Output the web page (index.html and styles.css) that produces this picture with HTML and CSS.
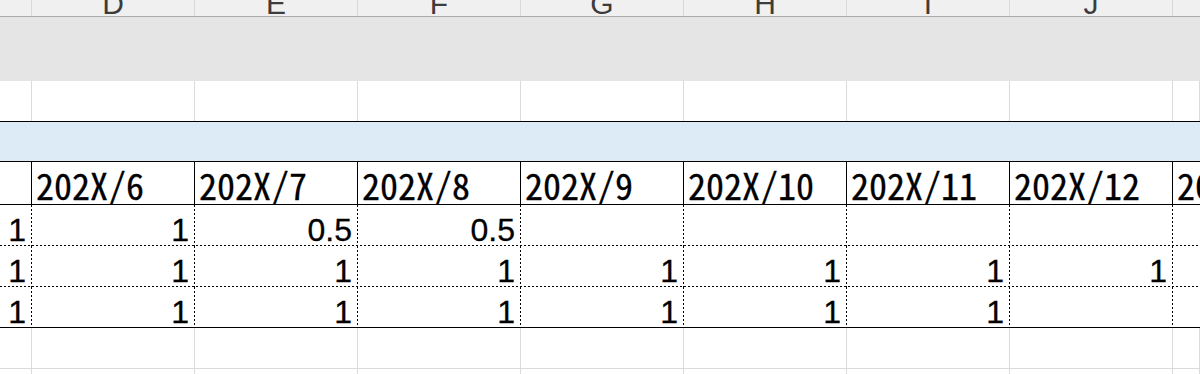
FILE: index.html
```html
<!DOCTYPE html>
<html lang="ja">
<head>
<meta charset="utf-8">
<title>工数表</title>
<link rel="stylesheet" href="styles.css">
</head>
<body>
<div class="sheet">
  <div class="row col-heads">
    <div class="ch"></div>
    <div class="ch"><span>D</span></div>
    <div class="ch"><span>E</span></div>
    <div class="ch"><span>F</span></div>
    <div class="ch"><span>G</span></div>
    <div class="ch"><span>H</span></div>
    <div class="ch"><span>I</span></div>
    <div class="ch"><span>J</span></div>
    <div class="ch"></div>
  </div>

  <div class="row band band-gray"></div>

  <div class="row grid-row top-row">
    <div class="c"></div><div class="c"></div><div class="c"></div><div class="c"></div><div class="c"></div>
    <div class="c"></div><div class="c"></div><div class="c"></div><div class="c"></div>
  </div>

  <div class="row band band-blue"></div>

  <div class="row months">
    <div class="m"></div>
    <div class="m">202X/6</div>
    <div class="m">202X/7</div>
    <div class="m">202X/8</div>
    <div class="m">202X/9</div>
    <div class="m">202X/10</div>
    <div class="m">202X/11</div>
    <div class="m">202X/12</div>
    <div class="m">202X/1</div>
  </div>

  <div class="row data">
    <div class="d">1</div>
    <div class="d">1</div>
    <div class="d">0.5</div>
    <div class="d">0.5</div>
    <div class="d"></div>
    <div class="d"></div>
    <div class="d"></div>
    <div class="d"></div>
    <div class="d"></div>
  </div>
  <div class="row data">
    <div class="d">1</div>
    <div class="d">1</div>
    <div class="d">1</div>
    <div class="d">1</div>
    <div class="d">1</div>
    <div class="d">1</div>
    <div class="d">1</div>
    <div class="d">1</div>
    <div class="d"></div>
  </div>
  <div class="row data last">
    <div class="d">1</div>
    <div class="d">1</div>
    <div class="d">1</div>
    <div class="d">1</div>
    <div class="d">1</div>
    <div class="d">1</div>
    <div class="d">1</div>
    <div class="d"></div>
    <div class="d"></div>
  </div>

  <div class="row grid-row lower">
    <div class="c"></div><div class="c"></div><div class="c"></div><div class="c"></div><div class="c"></div>
    <div class="c"></div><div class="c"></div><div class="c"></div><div class="c"></div>
  </div>
  <div class="row grid-row lower">
    <div class="c"></div><div class="c"></div><div class="c"></div><div class="c"></div><div class="c"></div>
    <div class="c"></div><div class="c"></div><div class="c"></div><div class="c"></div>
  </div>
</div>
</body>
</html>
```

FILE: styles.css
```css
html, body {
  margin: 0;
  padding: 0;
  background: #fff;
  overflow: hidden;
}

.sheet {
  width: 1200px;
  height: 374px;
  overflow: hidden;
}

/* every sheet row shares the same column widths (cell + 1px right edge) */
.row {
  display: grid;
  grid-template-columns: 32px repeat(7, 163px) 1fr;
  box-sizing: border-box;
}

.row > div {
  box-sizing: border-box;
  min-width: 0;
  overflow: hidden;
}

/* column letters strip */
.col-heads {
  height: 17px;
  background: #f0f0f0;
  border-bottom: 1px solid #ababab;
  overflow: hidden;
}

.ch {
  border-right: 1px solid #d9d9d9;
  display: flex;
  justify-content: center;
  align-items: flex-end;
}

.ch:last-child {
  border-right: none;
}

.ch span {
  font-family: "Liberation Sans", Arial, sans-serif;
  font-size: 30px;
  line-height: 30px;
  margin-bottom: -3px;
  color: #3c3c3c;
}

/* filled bands spanning the whole row */
.band-gray {
  height: 64px;
  background: #e5e5e5;
}

.band-blue {
  height: 41px;
  background: #ddebf7;
  border-top: 1px solid #000;
  border-bottom: 1px solid #000;
}

/* plain cells with light gridlines */
.grid-row .c {
  border-right: 1px solid #dadada;
}

.top-row {
  height: 40px;
}

.lower {
  height: 41px;
  border-bottom: 1px solid #dadada;
}

/* month header row */
.months {
  height: 43px;
  border-bottom: 1px solid #000;
}

.m {
  border-right: 1px solid #000;
  display: flex;
  align-items: flex-end;
  padding: 0 0 2px 4px;
  font-family: "Noto Sans CJK JP", sans-serif;
  font-feature-settings: "hwid" 1;
  font-size: 36px;
  line-height: 36px;
  color: #000;
  -webkit-text-stroke: 0.3px #000;
  white-space: nowrap;
}

.m:last-child {
  border-right: none;
}

/* numeric rows with dotted borders */
.data {
  height: 41px;
  background-image: repeating-linear-gradient(to right, #000 0 2px, transparent 2px 4px);
  background-size: 100% 1px;
  background-position: left bottom;
  background-repeat: no-repeat;
}

.data.last {
  background-image: linear-gradient(#000, #000);
}

.d {
  display: flex;
  justify-content: flex-end;
  align-items: flex-end;
  padding: 0 6px 0 0;
  font-family: "Liberation Sans", Arial, sans-serif;
  font-size: 32px;
  line-height: 32px;
  color: #000;
  -webkit-text-stroke: 0.3px #000;
  background-image: repeating-linear-gradient(to bottom, #000 0 2px, transparent 2px 4px);
  background-size: 1px 100%;
  background-position: right top;
  background-repeat: no-repeat;
}

.d:last-child {
  background-image: none;
}
```
